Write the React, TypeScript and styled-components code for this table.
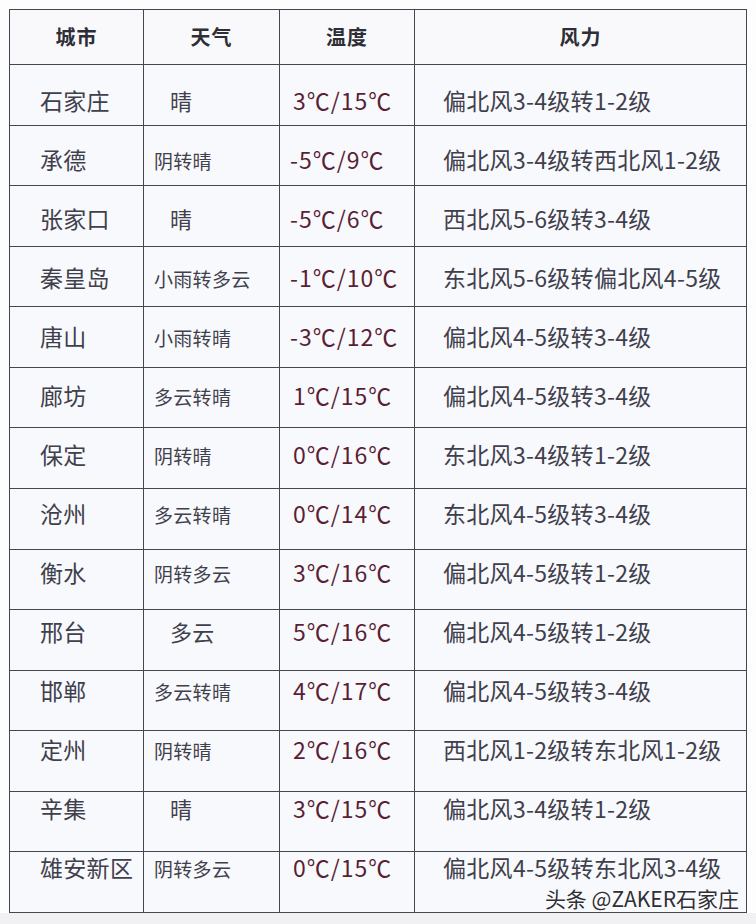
import React from "react";
import styled, { createGlobalStyle } from "styled-components";

const Global = createGlobalStyle`
  html, body {
    margin: 0;
    padding: 0;
    background: #fbfbfc;
  }
  body {
    font-family: "Noto Sans CJK SC", "Noto Sans", sans-serif;
  }
`;

const Page = styled.div`
  width: 756px;
  height: 924px;
  padding: 9px 0 0 9px;
  box-sizing: border-box;
  background: linear-gradient(#fdfdfe 0, #fdfdfe 913px, #f1f1f3 913px);
`;

const Table = styled.div`
  position: relative;
  width: 738px;
  height: 904px;
  box-sizing: border-box;
  padding: 1px;
  display: grid;
  grid-template-columns: 133px 135px 134px 1fr;
  grid-template-rows: 54px repeat(14, 1fr);
  gap: 1px;
  background: #46464e;
`;

const HeadCell = styled.div`
  background: #f9f9fc;
  display: flex;
  align-items: center;
  justify-content: center;
  padding-bottom: 2px;
  font-size: 20px;
  font-weight: 700;
  color: #2e2e36;
  letter-spacing: 1px;
`;

const Cell = styled.div<{ $row: number; $pad: number; $size?: number; $tone?: "temp" | "text" }>`
  background: #f8f9fc;
  box-sizing: border-box;
  padding-top: ${(p) => (p.$size && p.$size < 21 ? 25 : 23) - p.$row * 1.6}px;
  padding-left: ${(p) => p.$pad}px;
  font-size: ${(p) => p.$size ?? 23}px;
  line-height: 24px;
  white-space: nowrap;
  color: ${(p) => (p.$tone === "temp" ? "#5a1f34" : "#40404c")};
  letter-spacing: ${(p) => (p.$tone === "temp" ? "1px" : "0.3px")};
`;

const Watermark = styled.div`
  position: absolute;
  right: 8px;
  bottom: 4px;
  font-size: 21px;
  line-height: 22px;
  color: #2f2f35;
  text-shadow: 0 0 2px #ffffff, 0 0 2px #ffffff;
`;

type Row = { city: string; weather: string; temp: string; wind: string };

const rows: Row[] = [
  { city: "石家庄", weather: "晴", temp: "3℃/15℃", wind: "偏北风3-4级转1-2级" },
  { city: "承德", weather: "阴转晴", temp: "-5℃/9℃", wind: "偏北风3-4级转西北风1-2级" },
  { city: "张家口", weather: "晴", temp: "-5℃/6℃", wind: "西北风5-6级转3-4级" },
  { city: "秦皇岛", weather: "小雨转多云", temp: "-1℃/10℃", wind: "东北风5-6级转偏北风4-5级" },
  { city: "唐山", weather: "小雨转晴", temp: "-3℃/12℃", wind: "偏北风4-5级转3-4级" },
  { city: "廊坊", weather: "多云转晴", temp: "1℃/15℃", wind: "偏北风4-5级转3-4级" },
  { city: "保定", weather: "阴转晴", temp: "0℃/16℃", wind: "东北风3-4级转1-2级" },
  { city: "沧州", weather: "多云转晴", temp: "0℃/14℃", wind: "东北风4-5级转3-4级" },
  { city: "衡水", weather: "阴转多云", temp: "3℃/16℃", wind: "偏北风4-5级转1-2级" },
  { city: "邢台", weather: "多云", temp: "5℃/16℃", wind: "偏北风4-5级转1-2级" },
  { city: "邯郸", weather: "多云转晴", temp: "4℃/17℃", wind: "偏北风4-5级转3-4级" },
  { city: "定州", weather: "阴转晴", temp: "2℃/16℃", wind: "西北风1-2级转东北风1-2级" },
  { city: "辛集", weather: "晴", temp: "3℃/15℃", wind: "偏北风3-4级转1-2级" },
  { city: "雄安新区", weather: "阴转多云", temp: "0℃/15℃", wind: "偏北风4-5级转东北风3-4级" },
];

export default function App() {
  return (
    <>
      <Global />
      <Page>
        <Table>
          <HeadCell>城市</HeadCell>
          <HeadCell>天气</HeadCell>
          <HeadCell>温度</HeadCell>
          <HeadCell>风力</HeadCell>
          {rows.map((r, i) => {
            const short = r.weather.length <= 2;
            return (
              <React.Fragment key={r.city}>
                <Cell $row={i} $pad={30}>{r.city}</Cell>
                <Cell $row={i} $pad={short ? 26 : 10} $size={short ? 22 : 19}>
                  {r.weather}
                </Cell>
                <Cell $row={i} $pad={r.temp.startsWith("-") ? 10 : 13} $size={23} $tone="temp">
                  {r.temp}
                </Cell>
                <Cell $row={i} $pad={28}>{r.wind}</Cell>
              </React.Fragment>
            );
          })}
          <Watermark>头条 @ZAKER石家庄</Watermark>
        </Table>
      </Page>
    </>
  );
}
